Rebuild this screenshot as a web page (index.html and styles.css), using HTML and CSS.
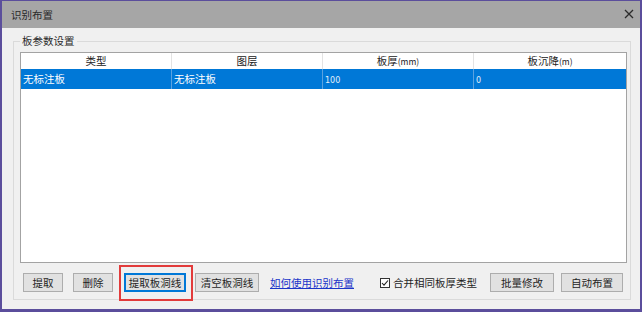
FILE: index.html
```html
<!DOCTYPE html>
<html lang="zh">
<head>
<meta charset="utf-8">
<title>识别布置</title>
<link rel="stylesheet" href="styles.css">
</head>
<body>
<div class="window">
  <div class="titlebar">
    <span class="title">识别布置</span>
    <svg class="close" width="10" height="10" viewBox="0 0 10 10"><path d="M1 1L9 9M9 1L1 9" stroke="#2b2b2b" stroke-width="1.3" fill="none"/></svg>
  </div>
  <div class="main">
    <fieldset class="group">
      <legend class="legend">板参数设置</legend>
      <div class="table">
        <div class="row head">
          <div class="cell">类型</div>
          <div class="cell">图层</div>
          <div class="cell">板厚<span class="unit">(mm)</span></div>
          <div class="cell">板沉降<span class="unit">(m)</span></div>
        </div>
        <div class="row sel">
          <div class="cell">无标注板</div>
          <div class="cell">无标注板</div>
          <div class="cell num">100</div>
          <div class="cell num">0</div>
        </div>
      </div>
      <div class="actions">
        <button class="btn b-get">提取</button>
        <button class="btn b-del">删除</button>
        <span class="mark"><button class="btn focus b-hole">提取板洞线</button></span>
        <button class="btn b-clear">清空板洞线</button>
        <a class="link" href="#">如何使用识别布置</a>
        <label class="check"><svg width="10" height="10" viewBox="0 0 10 10"><rect x="0.5" y="0.5" width="9" height="9" fill="#fff" stroke="#333"/><path d="M2 5L4 7.2L8 2.5" stroke="#222" stroke-width="1.1" fill="none"/></svg>合并相同板厚类型</label>
        <button class="btn b-batch">批量修改</button>
        <button class="btn b-auto">自动布置</button>
      </div>
    </fieldset>
  </div>
</div>
</body>
</html>
```
FILE: styles.css
```css
* { box-sizing: border-box; }
html, body { margin: 0; padding: 0; background: #f0f0f0; }
body { font-family: "Noto Sans CJK SC", "Noto Sans", sans-serif; font-size: 10.5px; color: #1e1e1e; }

.window {
  width: 642px;
  height: 312px;
  border: solid #5b4e9c;
  border-width: 1px 2px 3px 2px;
  display: flex;
  flex-direction: column;
  background: #f0f0f0;
}
.titlebar {
  height: 27px;
  flex: none;
  background: #a6a6a6;
  display: flex;
  align-items: center;
  justify-content: space-between;
  padding: 0 6px 0 9px;
}
.title { font-size: 10.5px; color: #2a2a2a; line-height: 14px; }
.close { display: block; margin-top: -1px; }

.main {
  flex: 1;
  display: flex;
  flex-direction: column;
  padding: 0 9px 9px 11px;
}
.group {
  flex: 1;
  margin: 5px 0 0 0;
  border: 1px solid #dadada;
  padding: 3px 3px 7px 6px;
  display: flex;
  flex-direction: column;
  min-width: 0;
}
.legend {
  padding: 0 2px;
  line-height: 16px;
  font-size: 10.5px;
  color: #2a2a2a;
}

.table {
  flex: 1;
  background: #fff;
  border: 1px solid #a3a3a3;
}
.row {
  display: grid;
  grid-template-columns: 151px 151px 151px 1fr;
}
.head { height: 16px; line-height: 16px; text-align: center; color: #222; }
.head .cell { border-right: 1px solid #e3e3e3; }
.head .cell:last-child { border-right: none; }
.unit { font-size: 8.5px; }
.sel { height: 20px; background: #0078d7; color: #fff; }
.sel .cell { border-right: 1px solid #5aa2e0; padding-left: 2px; display: flex; align-items: center; height: 20px; line-height: 14px; }
.sel .cell:last-child { border-right: none; }
.num { font-family: "DejaVu Sans", sans-serif; font-size: 8px; color: #e3effa; padding-top: 3px; }

.actions {
  margin-top: 10px;
  display: flex;
  align-items: center;
  padding-left: 3px;
  height: 19px;
}
.btn {
  font-family: inherit;
  font-size: 10.5px;
  height: 19px;
  padding: 0;
  background: #e1e1e1;
  border: 1px solid #adadad;
  color: #1e1e1e;
  line-height: 17px;
}
.btn.focus { border: 1px solid #0078d7; box-shadow: inset 0 0 0 1px #0078d7; }
.b-get { width: 40px; }
.b-del { width: 40px; margin-left: 10px; }
.mark { position: relative; display: flex; margin-left: 11px; }
.mark::after {
  content: "";
  position: absolute;
  left: -5px; right: -7px; top: -8px; bottom: -9px;
  border: 2px solid #e23b3b;
}
.b-hole { width: 62px; }
.b-clear { width: 64px; margin-left: 9px; }
.link { margin-left: 11px; color: #1a35c9; text-decoration: underline; line-height: 14px; }
.check { margin-left: 26px; display: flex; align-items: center; gap: 3px; color: #1e1e1e; }
.check svg { display: block; }
.b-batch { width: 64px; margin-left: 13px; }
.b-auto { width: 62px; margin-left: 7px; }
```
